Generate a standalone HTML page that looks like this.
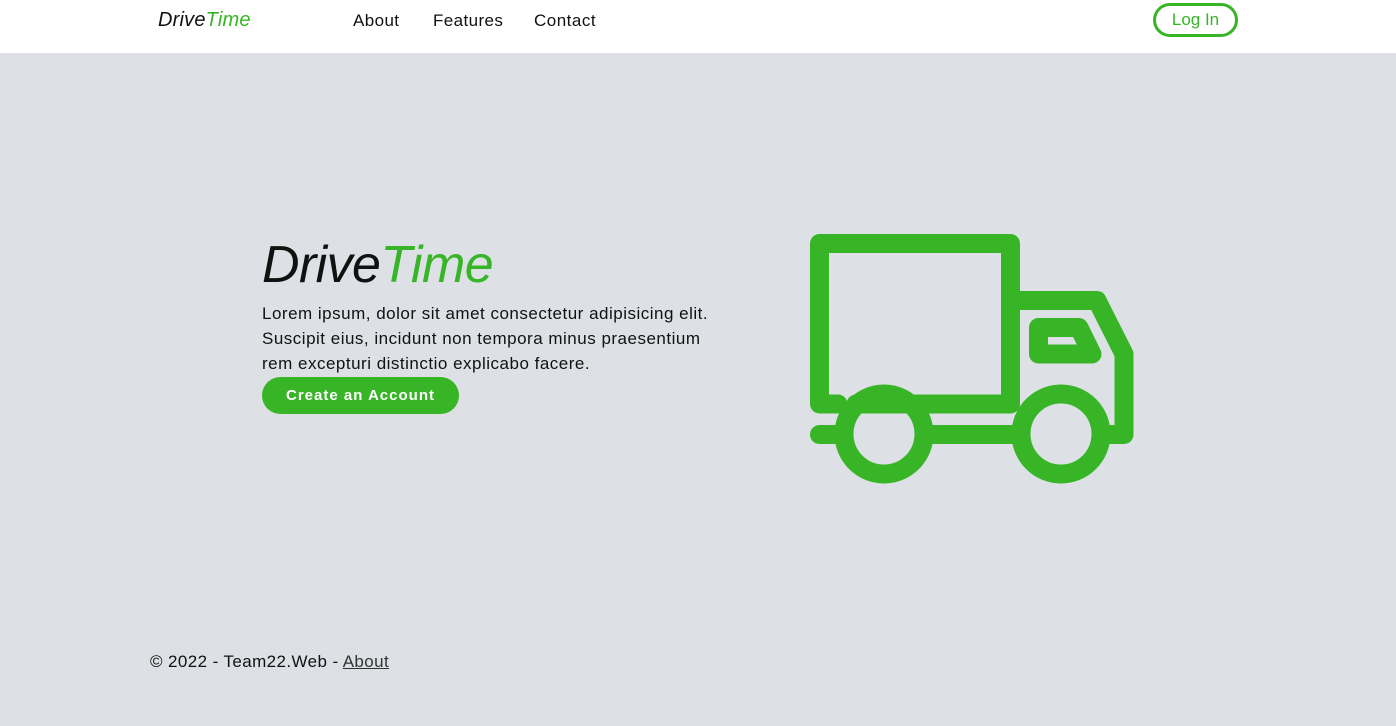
<!DOCTYPE html>
<html><head><style>
*{margin:0;padding:0;box-sizing:border-box}
body{width:1396px;height:726px;background:#dde1e5;font-family:"Liberation Sans",sans-serif;position:relative;overflow:hidden;color:#111}
.nav{position:absolute;left:0;top:0;width:1396px;height:53px;background:#fff}
.abs{position:absolute;white-space:nowrap}
.g{color:#37b526}
</style></head><body>
<div class="nav">
<div class="abs" style="left:158px;top:9px;font-size:20px;font-style:italic;letter-spacing:0.2px">Drive<span class="g">Time</span></div>
<div class="abs" style="left:353px;top:11px;font-size:17px;letter-spacing:0.4px">About</div>
<div class="abs" style="left:433px;top:11px;font-size:17px;letter-spacing:0.4px">Features</div>
<div class="abs" style="left:534px;top:11px;font-size:17px;letter-spacing:0.5px">Contact</div>
<div class="abs g" style="left:1153px;top:3px;width:85px;height:34px;border:3px solid #37b526;border-radius:17px;font-size:17px;text-align:center;line-height:28px">Log In</div>
</div>
<div class="abs" style="left:262px;top:235px;font-size:52px;font-style:italic;letter-spacing:-0.6px">Drive<span class="g">Time</span></div>
<div class="abs" style="left:262px;top:301px;font-size:17px;line-height:25px;letter-spacing:0.5px">Lorem ipsum, dolor sit amet consectetur adipisicing elit.<br>Suscipit eius, incidunt non tempora minus praesentium<br>rem excepturi distinctio explicabo facere.</div>
<div class="abs" style="left:262px;top:377px;width:197px;height:37px;background:#37b526;border-radius:19px;color:#fff;font-size:15px;font-weight:bold;letter-spacing:1px;text-align:center;line-height:37px">Create an Account</div>
<svg class="abs" style="left:0;top:0" width="1396" height="726">
<g fill="none" stroke="#37b526" stroke-width="19" stroke-linejoin="round" stroke-linecap="round">
<path d="M838 404H819.5V243.5H1010.5V404H856"/>
<path d="M1010.5 300.5H1097L1124 354V434.5H1108"/>
<path d="M819.5 434.5H838M930 434.5H1014"/>
<path d="M1038.5 327.5H1079L1092 354H1038.5Z"/>
<circle cx="884" cy="434" r="40"/>
<circle cx="1061" cy="434" r="40"/>
</g></svg>
<div class="abs" style="left:150px;top:652px;font-size:17px;letter-spacing:0.4px">© 2022 - Team22.Web - <span style="text-decoration:underline;color:#333">About</span></div>
</body></html>
